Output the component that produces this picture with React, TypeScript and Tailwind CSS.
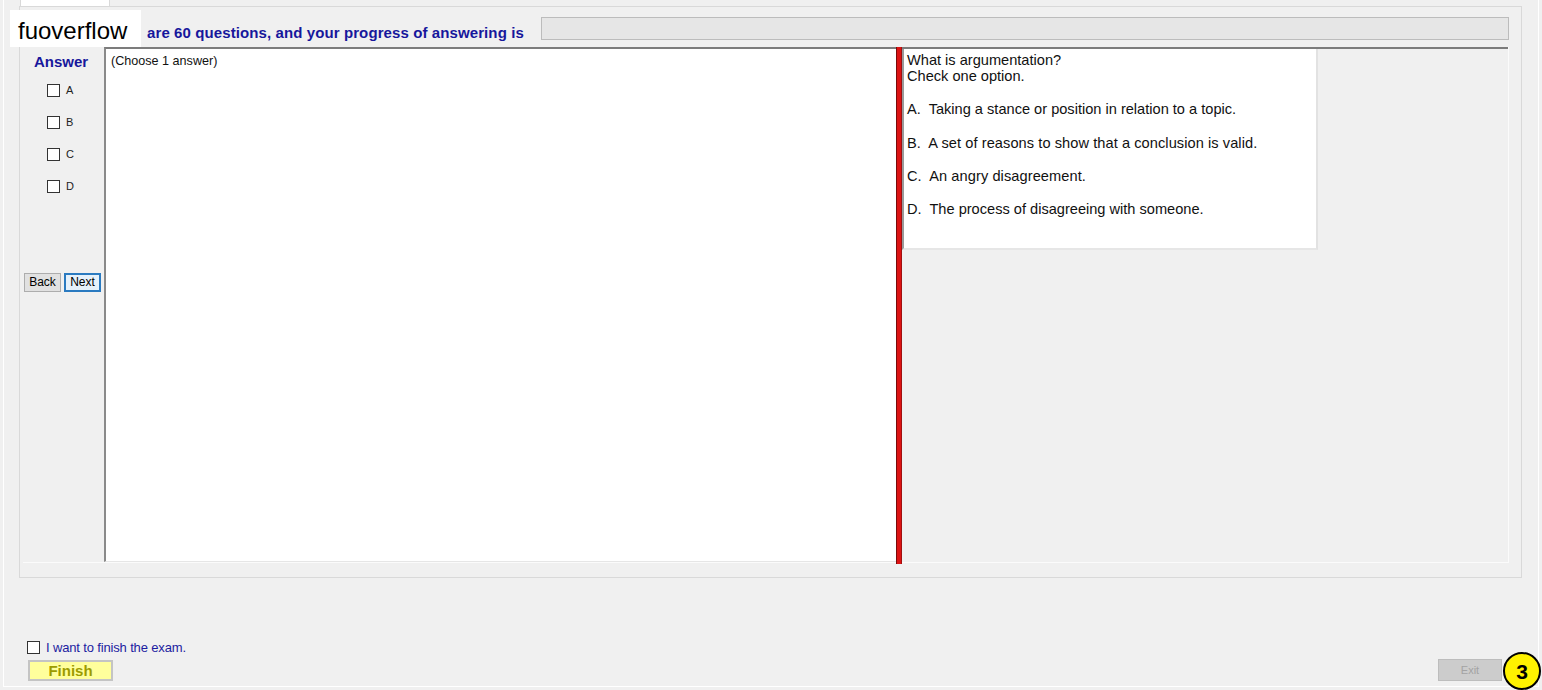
import React from "react";

const Box = () => (
  <span className="inline-block w-[13px] h-[13px] bg-white border border-[#333333]" />
);

export default function App() {
  const opts = ["A", "B", "C", "D"];
  return (
    <div className="w-[1542px] h-[690px] bg-[#f0f0f0] relative overflow-hidden font-['Liberation_Sans',Arial,sans-serif] text-black">
      <div className="ml-[3px] w-[1536px] h-[687px] border-l border-r border-b border-white flex flex-col">
        {/* tab strip */}
        <div className="h-[6px] flex">
          <div className="ml-[16px] w-[90px] h-[6px] bg-white border-x border-[#d9d9d9]" />
        </div>
        {/* tab page */}
        <div className="ml-[15px] w-[1503px] h-[572px] border border-[#d9d9d9] flex flex-col">
          <div className="mt-[10px] h-[23px] flex relative">
            <div className="pl-[127px] pt-[7px] text-[15px] leading-[17px] tracking-[0.1px] font-bold text-[#17179c] whitespace-nowrap">
              are 60 questions, and your progress of answering is
            </div>
            <div className="ml-auto mr-[12px] w-[968px] h-[23px] bg-[#e6e6e6] border border-[#bcbcbc]" />
          </div>
          {/* group */}
          <div className="mt-[7px] ml-[3px] w-[1486px] h-[516px] flex border-r border-b border-[#fbfbfb]">
            <div className="w-[81px] flex flex-col">
              <div className="mt-[7px] pl-[11px] text-[15px] leading-[16px] font-bold text-[#17179c]">Answer</div>
              <div className="mt-[14px] flex flex-col gap-[19px] pl-[24px]">
                {opts.map((o) => (
                  <div key={o} className="flex items-center h-[13px]">
                    <Box />
                    <span className="ml-[6px] text-[11px] leading-[13px] text-[#222]">{o}</span>
                  </div>
                ))}
              </div>
              <div className="mt-[80px] flex gap-[3px] pl-[1px]">
                <button className="w-[37px] h-[19px] bg-[#e1e1e1] border border-[#adadad] text-[12px] leading-[17px] text-black">
                  Back
                </button>
                <button className="w-[37px] h-[19px] bg-[#e5f1fb] border-2 border-[#2a7ac0] text-[12px] leading-[15px] text-black">
                  Next
                </button>
              </div>
            </div>
            <div className="w-[792px] bg-white border-t-2 border-t-[#7c7c7c] border-l-2 border-l-[#8a8a8a] border-b border-b-[#e6e6e6]">
              <div className="pl-[5px] pt-[5px] text-[12.6px] leading-[15px] text-[#111]">(Choose 1 answer)</div>
            </div>
            <div className="w-[6px] h-[517px] bg-[#dd1313] border-l border-l-[#7a0a0a] border-r border-r-[#a01010]" />
            <div className="flex-1 border-t-2 border-t-[#7c7c7c]">
              <div className="w-[416px] h-[201px] bg-white border-l-2 border-l-[#9a9a9a] border-r-2 border-r-[#e2e2e2] border-b-2 border-b-[#e6e6e6] pl-[3px] pt-[3px] text-[14.6px] leading-[16px] text-[#111]">
                <div>What is argumentation?</div>
                <div>Check one option.</div>
                <div className="mt-[17px] whitespace-pre">A.  Taking a stance or position in relation to a topic.</div>
                <div className="mt-[18px] whitespace-pre tracking-[0.07px]">B.  A set of reasons to show that a conclusion is valid.</div>
                <div className="mt-[17px] whitespace-pre tracking-[0.08px]">C.  An angry disagreement.</div>
                <div className="mt-[17px] whitespace-pre">D.  The process of disagreeing with someone.</div>
              </div>
            </div>
          </div>
        </div>
        {/* bottom */}
        <div className="mt-[62px] ml-[23px] flex items-center h-[14px]">
          <Box />
          <span className="ml-[6px] mt-[2px] text-[13px] leading-[14px] text-[#1c1ca0] tracking-[-0.15px]">I want to finish the exam.</span>
        </div>
        <div className="mt-[5px] flex items-start">
          <button className="ml-[24px] mt-[1px] w-[85px] h-[21px] bg-[#ffff9c] border-2 border-[#c4c4c4] text-[15px] leading-[17px] font-bold text-[#9c9c00]">
            Finish
          </button>
          <button className="ml-auto mr-[36px] w-[64px] h-[22px] bg-[#cccccc] border border-[#bdbdbd] text-[11px] leading-[20px] text-[#a3a3a3]">
            Exit
          </button>
        </div>
      </div>
      {/* watermark overlay */}
      <div className="absolute left-[10px] top-[10px] w-[131px] h-[37px] bg-white pl-[8px] pt-[7px] text-[24px] leading-[28px] text-black">
        fuoverflow
      </div>
      {/* badge */}
      <div className="absolute left-[1503px] top-[652px] w-[38px] h-[38px] rounded-full bg-[#fff200] border-2 border-black flex items-center justify-center text-[21px] font-bold leading-none">
        3
      </div>
    </div>
  );
}
